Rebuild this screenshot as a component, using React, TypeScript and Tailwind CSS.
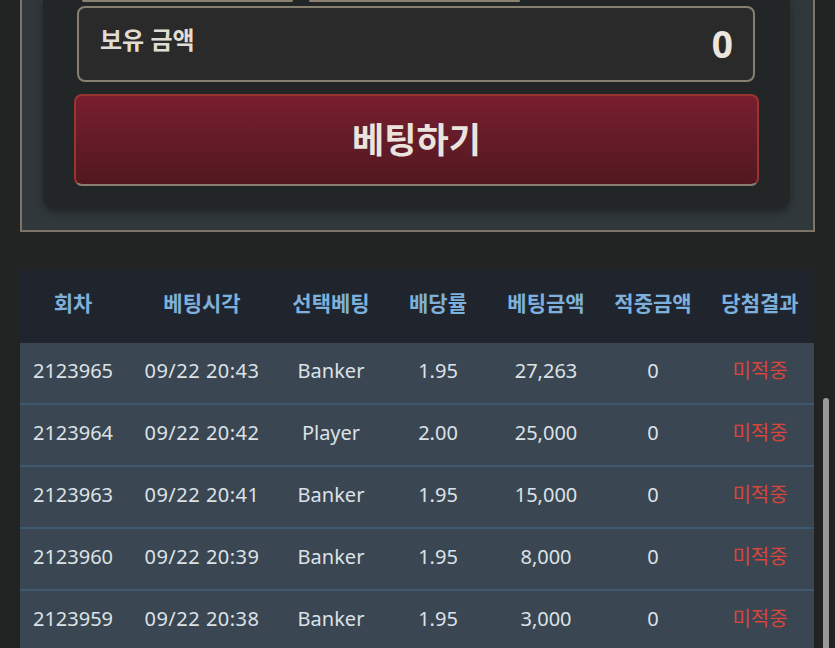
import React from "react";

const rows = [
  ["2123965", "09/22 20:43", "Banker", "1.95", "27,263", "0", "미적중"],
  ["2123964", "09/22 20:42", "Player", "2.00", "25,000", "0", "미적중"],
  ["2123963", "09/22 20:41", "Banker", "1.95", "15,000", "0", "미적중"],
  ["2123960", "09/22 20:39", "Banker", "1.95", "8,000", "0", "미적중"],
  ["2123959", "09/22 20:38", "Banker", "1.95", "3,000", "0", "미적중"],
];

const headers = ["회차", "베팅시각", "선택베팅", "배당률", "베팅금액", "적중금액", "당첨결과"];

export default function App() {
  return (
    <div
      className="relative w-[835px] h-[648px] overflow-hidden bg-[#222423]"
      style={{ fontFamily: '"Noto Sans", "Noto Sans CJK KR", sans-serif' }}
    >
      {/* outer panel */}
      <div className="ml-[20px] w-[795px] border-x-2 border-b-2 border-[#7c7466] bg-[#30383b] pl-[21px] pr-[22px] pb-[21px]">
        <div className="w-[747px] rounded-b-[12px] bg-[#232626] shadow-[0_3px_8px_rgba(0,0,0,0.35)] pb-[23px]">
          {/* bottoms of buttons above */}
          <div className="flex h-[2px] gap-[16px] pl-[39px]">
            <div className="w-[211px] h-[2px] border-b-2 border-x-2 rounded-b-[6px] border-[#8a8170]" />
            <div className="w-[211px] h-[2px] border-b-2 border-x-2 rounded-b-[6px] border-[#8a8170]" />
          </div>
          {/* balance box */}
          <div className="mt-[4px] ml-[34px] w-[678px] h-[76px] rounded-[8px] border-2 border-[#878070] bg-[#292a29] flex items-center justify-between pl-[21px] pr-[20px]">
            <span className="text-[24px] font-semibold text-[#e2ddd4] leading-none mb-[8px]">보유 금액</span>
            <span className="text-[37px] font-bold text-[#ebe6de] leading-none mb-[2px]">0</span>
          </div>
          {/* bet button */}
          <div className="mt-[12px] ml-[31px] w-[685px] h-[92px] rounded-[8px] border-2 border-[#9a3430] border-b-[#887f70] bg-gradient-to-b from-[#781e2f] to-[#511820] flex items-center justify-center">
            <span className="text-[35px] font-bold text-[#ebe4de] leading-none mb-[2px]">베팅하기</span>
          </div>
        </div>
      </div>

      {/* table */}
      <div className="mt-[37px] ml-[20px] w-[794px]">
        <div className="grid grid-cols-[106px_152px_106px_108px_108px_106px_108px] h-[74px] bg-[#20252d] items-center">
          {headers.map((h) => (
            <div key={h} className="text-center text-[21px] font-bold text-[#7eb0dc] mb-[4px]">
              {h}
            </div>
          ))}
        </div>
        {rows.map((r, i) => (
          <div
            key={i}
            className="grid grid-cols-[106px_152px_106px_108px_108px_106px_108px] h-[62px] bg-[#3a4651] border-b-2 border-[#3c596f] items-center"
          >
            {r.map((c, j) => (
              <div
                key={j}
                className={
                  "text-center text-[20px] leading-none mb-[4px] whitespace-nowrap " +
                  (j === 1 ? "tracking-[0.5px] " : "") +
                  (j === 6 ? "text-[#d9453d]" : "text-[#dce2e7]")
                }
              >
                {c}
              </div>
            ))}
          </div>
        ))}
      </div>

      {/* scrollbar thumb */}
      <div className="absolute left-[823px] top-[398px] w-[6px] h-[300px] rounded-full bg-[#9a9a9a]" />
    </div>
  );
}
